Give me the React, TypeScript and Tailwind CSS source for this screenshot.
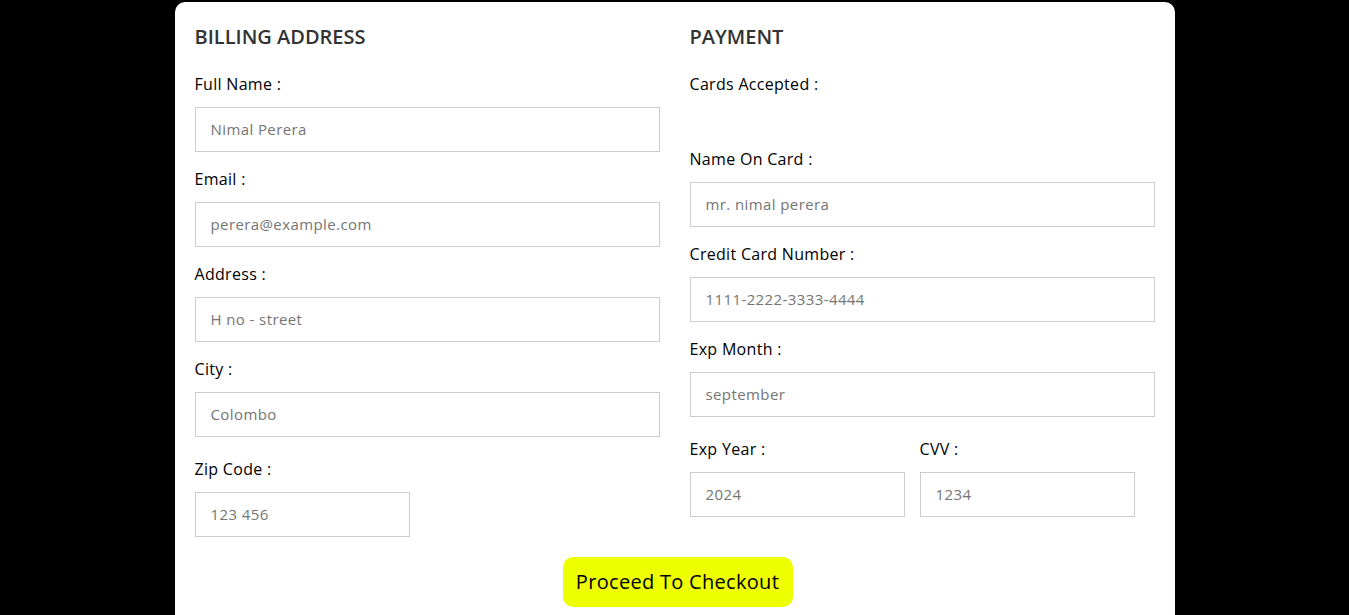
const font = { fontFamily: '"Open Sans", "Liberation Sans", sans-serif' };

function Field({ label, placeholder, className = "" }: { label: string; placeholder: string; className?: string }) {
  return (
    <div className={"flex flex-col " + className}>
      <span className="text-[16px] leading-[24px] text-black tracking-[0.3px] mb-[11px]">{label}</span>
      <input
        placeholder={placeholder}
        className="h-[45px] w-full border border-[#cccccc] px-[15px] pb-[1px] text-[15px] tracking-[0.4px] text-black placeholder:text-[#757575] outline-none mb-[15px]"
      />
    </div>
  );
}

export default function App() {
  return (
    <div className="min-h-screen bg-black pt-[2px]" style={font}>
      <div className="mx-auto w-[1000px] rounded-t-[10px] bg-white px-[20px] pt-[20px] pb-[40px]">
        <div className="grid grid-cols-2 gap-x-[30px]">
          {/* billing */}
          <div className="flex flex-col">
            <h3 className="text-[20px] leading-[30px] font-semibold text-[#333333] uppercase mb-[20px]">
              Billing Address
            </h3>
            <Field label="Full Name :" placeholder="Nimal Perera" />
            <Field label="Email :" placeholder="perera@example.com" />
            <Field label="Address :" placeholder="H no - street" />
            <Field label="City :" placeholder="Colombo" />
            <div className="flex gap-[15px] mt-[5px]">
              <Field label="Zip Code :" placeholder="123 456" className="w-[215px]" />
            </div>
          </div>

          {/* payment */}
          <div className="flex flex-col">
            <h3 className="text-[20px] leading-[30px] font-semibold text-[#333333] uppercase mb-[20px]">
              Payment
            </h3>
            <span className="text-[16px] leading-[24px] text-black tracking-[0.3px] mb-[11px]">Cards Accepted :</span>
            <div className="h-[25px] mb-[15px]" />
            <Field label="Name On Card :" placeholder="mr. nimal perera" />
            <Field label="Credit Card Number :" placeholder="1111-2222-3333-4444" />
            <Field label="Exp Month :" placeholder="september" />
            <div className="flex gap-[15px] mt-[5px]">
              <Field label="Exp Year :" placeholder="2024" className="w-[215px]" />
              <Field label="CVV :" placeholder="1234" className="w-[215px]" />
            </div>
          </div>
        </div>

        <div className="flex justify-center pl-[6px] mt-[5px]">
          <button className="h-[50px] w-[230px] rounded-[10px] bg-[#eeff00] text-[20px] tracking-[0.3px] text-black">
            Proceed To Checkout
          </button>
        </div>
      </div>
    </div>
  );
}
